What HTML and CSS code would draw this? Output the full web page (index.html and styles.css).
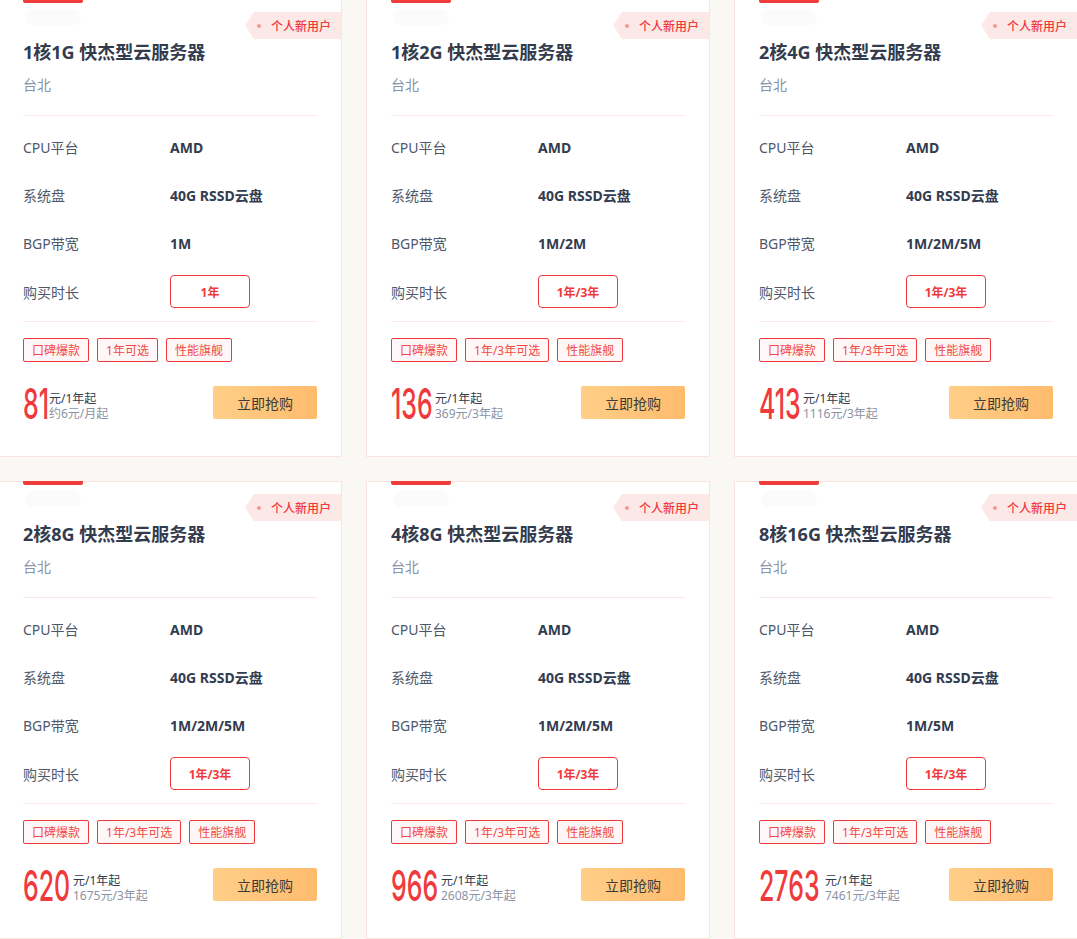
FILE: index.html
```html
<!DOCTYPE html>
<html lang="zh-CN">
<head>
<meta charset="utf-8">
<title>快杰型云服务器</title>
<link rel="stylesheet" href="styles.css">
</head>
<body>
<div class="grid">

  <div class="card">
    <span class="accent"></span><span class="ghost"></span>
    <div class="badge"><i class="dot"></i>个人新用户</div>
    <h3 class="title">1核1G 快杰型云服务器</h3>
    <div class="region">台北</div>
    <div class="specs">
      <div class="row"><span class="label">CPU平台</span><span class="value">AMD</span></div>
      <div class="row"><span class="label">系统盘</span><span class="value">40G RSSD云盘</span></div>
      <div class="row"><span class="label">BGP带宽</span><span class="value">1M</span></div>
      <div class="row last"><span class="label">购买时长</span><span class="period">1年</span></div>
    </div>
    <div class="tags"><span class="tag">口碑爆款</span><span class="tag">1年可选</span><span class="tag">性能旗舰</span></div>
    <div class="foot">
      <div class="price">
        <span class="num" style="width:26px"><span class="num-i">81</span></span>
        <span class="unit"><span class="u1">元/1年起</span><span class="u2">约6元/月起</span></span>
      </div>
      <button class="buy">立即抢购</button>
    </div>
  </div>

  <div class="card">
    <span class="accent"></span><span class="ghost"></span>
    <div class="badge"><i class="dot"></i>个人新用户</div>
    <h3 class="title">1核2G 快杰型云服务器</h3>
    <div class="region">台北</div>
    <div class="specs">
      <div class="row"><span class="label">CPU平台</span><span class="value">AMD</span></div>
      <div class="row"><span class="label">系统盘</span><span class="value">40G RSSD云盘</span></div>
      <div class="row"><span class="label">BGP带宽</span><span class="value">1M/2M</span></div>
      <div class="row last"><span class="label">购买时长</span><span class="period">1年/3年</span></div>
    </div>
    <div class="tags"><span class="tag">口碑爆款</span><span class="tag">1年/3年可选</span><span class="tag">性能旗舰</span></div>
    <div class="foot">
      <div class="price">
        <span class="num" style="width:44px"><span class="num-i">136</span></span>
        <span class="unit"><span class="u1">元/1年起</span><span class="u2">369元/3年起</span></span>
      </div>
      <button class="buy">立即抢购</button>
    </div>
  </div>

  <div class="card">
    <span class="accent"></span><span class="ghost"></span>
    <div class="badge"><i class="dot"></i>个人新用户</div>
    <h3 class="title">2核4G 快杰型云服务器</h3>
    <div class="region">台北</div>
    <div class="specs">
      <div class="row"><span class="label">CPU平台</span><span class="value">AMD</span></div>
      <div class="row"><span class="label">系统盘</span><span class="value">40G RSSD云盘</span></div>
      <div class="row"><span class="label">BGP带宽</span><span class="value">1M/2M/5M</span></div>
      <div class="row last"><span class="label">购买时长</span><span class="period">1年/3年</span></div>
    </div>
    <div class="tags"><span class="tag">口碑爆款</span><span class="tag">1年/3年可选</span><span class="tag">性能旗舰</span></div>
    <div class="foot">
      <div class="price">
        <span class="num" style="width:44px"><span class="num-i">413</span></span>
        <span class="unit"><span class="u1">元/1年起</span><span class="u2">1116元/3年起</span></span>
      </div>
      <button class="buy">立即抢购</button>
    </div>
  </div>

  <div class="card">
    <span class="accent"></span><span class="ghost"></span>
    <div class="badge"><i class="dot"></i>个人新用户</div>
    <h3 class="title">2核8G 快杰型云服务器</h3>
    <div class="region">台北</div>
    <div class="specs">
      <div class="row"><span class="label">CPU平台</span><span class="value">AMD</span></div>
      <div class="row"><span class="label">系统盘</span><span class="value">40G RSSD云盘</span></div>
      <div class="row"><span class="label">BGP带宽</span><span class="value">1M/2M/5M</span></div>
      <div class="row last"><span class="label">购买时长</span><span class="period">1年/3年</span></div>
    </div>
    <div class="tags"><span class="tag">口碑爆款</span><span class="tag">1年/3年可选</span><span class="tag">性能旗舰</span></div>
    <div class="foot">
      <div class="price">
        <span class="num" style="width:50px"><span class="num-i">620</span></span>
        <span class="unit"><span class="u1">元/1年起</span><span class="u2">1675元/3年起</span></span>
      </div>
      <button class="buy">立即抢购</button>
    </div>
  </div>

  <div class="card">
    <span class="accent"></span><span class="ghost"></span>
    <div class="badge"><i class="dot"></i>个人新用户</div>
    <h3 class="title">4核8G 快杰型云服务器</h3>
    <div class="region">台北</div>
    <div class="specs">
      <div class="row"><span class="label">CPU平台</span><span class="value">AMD</span></div>
      <div class="row"><span class="label">系统盘</span><span class="value">40G RSSD云盘</span></div>
      <div class="row"><span class="label">BGP带宽</span><span class="value">1M/2M/5M</span></div>
      <div class="row last"><span class="label">购买时长</span><span class="period">1年/3年</span></div>
    </div>
    <div class="tags"><span class="tag">口碑爆款</span><span class="tag">1年/3年可选</span><span class="tag">性能旗舰</span></div>
    <div class="foot">
      <div class="price">
        <span class="num" style="width:50px"><span class="num-i">966</span></span>
        <span class="unit"><span class="u1">元/1年起</span><span class="u2">2608元/3年起</span></span>
      </div>
      <button class="buy">立即抢购</button>
    </div>
  </div>

  <div class="card">
    <span class="accent"></span><span class="ghost"></span>
    <div class="badge"><i class="dot"></i>个人新用户</div>
    <h3 class="title">8核16G 快杰型云服务器</h3>
    <div class="region">台北</div>
    <div class="specs">
      <div class="row"><span class="label">CPU平台</span><span class="value">AMD</span></div>
      <div class="row"><span class="label">系统盘</span><span class="value">40G RSSD云盘</span></div>
      <div class="row"><span class="label">BGP带宽</span><span class="value">1M/5M</span></div>
      <div class="row last"><span class="label">购买时长</span><span class="period">1年/3年</span></div>
    </div>
    <div class="tags"><span class="tag">口碑爆款</span><span class="tag">1年/3年可选</span><span class="tag">性能旗舰</span></div>
    <div class="foot">
      <div class="price">
        <span class="num" style="width:66px"><span class="num-i">2763</span></span>
        <span class="unit"><span class="u1">元/1年起</span><span class="u2">7461元/3年起</span></span>
      </div>
      <button class="buy">立即抢购</button>
    </div>
  </div>

</div>
</body>
</html>
```
FILE: styles.css
```css
html, body {
  margin: 0;
  padding: 0;
  overflow: hidden;
  background: #faf8f5;
}
body {
  font-family: "Noto Sans", "Noto Sans CJK SC", sans-serif;
  color: #333b4e;
}
.grid {
  display: grid;
  grid-template-columns: repeat(3, 344px);
  column-gap: 24px;
  row-gap: 24px;
  margin: -1px 0 0 -2px;
}
.card {
  position: relative;
  background: #fff;
  border: 1px solid #fde2e0;
  padding: 39px 24px 36px;
  height: 458px;
  box-sizing: border-box;
}
.accent {
  position: absolute;
  top: -1px;
  left: 24px;
  width: 60px;
  height: 4px;
  background: #f23c3c;
  border-radius: 0 0 2px 2px;
}
.ghost {
  position: absolute;
  top: 9px;
  left: 26px;
  width: 56px;
  height: 16px;
  border-radius: 8px;
  background: #fbfbfb;
}
.badge {
  position: absolute;
  top: 12px;
  right: 0;
  width: 96px;
  height: 27px;
  box-sizing: border-box;
  padding-left: 12px;
  display: flex;
  align-items: center;
  background: #fde8e8;
  clip-path: polygon(9px 0, 100% 0, 100% 100%, 9px 100%, 0 50%);
  color: #f0393b;
  font-size: 12px;
  font-weight: 500;
  font-family: "Noto Sans CJK SC", sans-serif;
}
.dot {
  width: 4px;
  height: 4px;
  border-radius: 50%;
  background: #f59696;
  margin-right: 10px;
}
.title {
  margin: 0;
  font-size: 18px;
  line-height: 26px;
  font-weight: 700;
  color: #333b4e;
}
.region {
  margin-top: 10px;
  font-size: 14px;
  line-height: 20px;
  color: #8a93a5;
}
.specs {
  margin-top: 20px;
  border-top: 1px solid #fce6e6;
  border-bottom: 1px solid #fce6e6;
  padding: 7px 0 5px;
}
.row {
  display: flex;
  align-items: center;
  height: 48px;
  font-size: 14px;
}
.row.last {
  height: 49px;
}
.label {
  width: 147px;
  flex: none;
  color: #4f586b;
}
.value {
  font-weight: 700;
  color: #333b4e;
}
.period {
  width: 80px;
  height: 33px;
  box-sizing: border-box;
  border: 1px solid #ef3a3b;
  border-radius: 4px;
  display: flex;
  align-items: center;
  justify-content: center;
  color: #ef3a3b;
  font-size: 12px;
  font-weight: 700;
}
.tags {
  display: flex;
  gap: 8px;
  margin-top: 16px;
}
.tag {
  height: 24px;
  box-sizing: border-box;
  padding: 0 8px;
  border: 1px solid #f0393b;
  border-radius: 2px;
  background: #fff7f7;
  display: flex;
  align-items: center;
  font-size: 12px;
  color: #f14a45;
}
.foot {
  margin-top: 24px;
  display: flex;
  align-items: center;
  justify-content: space-between;
  height: 33px;
}
.price {
  display: flex;
  align-items: flex-end;
}
.num {
  display: inline-block;
  height: 34px;
  overflow: visible;
  white-space: nowrap;
}
.num-i {
  display: inline-block;
  font-family: Inter, "Liberation Sans", sans-serif;
  font-weight: 500;
  font-size: 43px;
  line-height: 34px;
  color: #f03a3c;
  transform: scaleX(0.58);
  transform-origin: 0 0;
}
.unit {
  display: flex;
  flex-direction: column;
  font-size: 12px;
  line-height: 15px;
  margin-bottom: -1px;
}
.u1 {
  color: #333b4e;
}
.u2 {
  color: #8a93a5;
}
.buy {
  width: 104px;
  height: 33px;
  border: 0;
  border-radius: 2px;
  background: linear-gradient(90deg, #ffcf88, #ffbb6d);
  color: #3a3a3a;
  font-family: "Noto Sans CJK SC", sans-serif;
  font-size: 14px;
  padding: 0;
  cursor: pointer;
}
```
